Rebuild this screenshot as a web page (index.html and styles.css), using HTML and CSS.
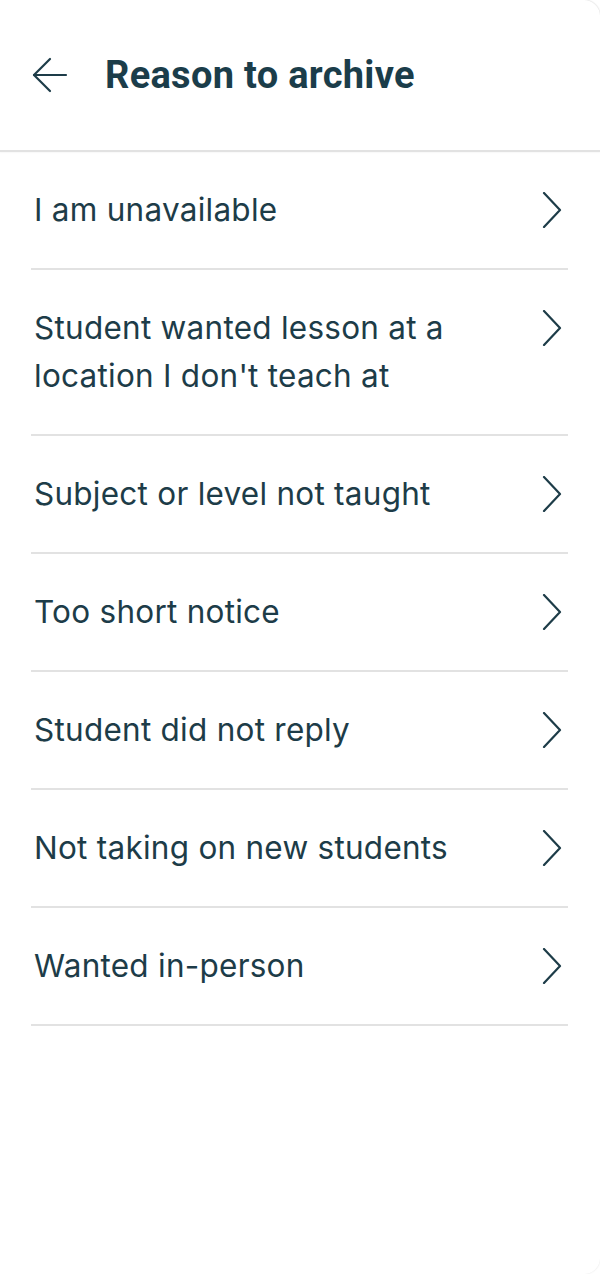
FILE: index.html
```html
<!DOCTYPE html>
<html lang="en">
<head>
  <meta charset="UTF-8">
  <title>Reason to archive</title>
  <link rel="stylesheet" href="styles.css">
</head>
<body>
  <div class="sheet">
    <!-- header -->
    <div class="sheet-header">
      <button class="back-btn" aria-label="Back">
        <svg width="40" height="40" viewBox="0 0 40 40" fill="none" stroke="currentColor" stroke-width="2.2" stroke-linecap="round" stroke-linejoin="round">
          <path d="M21 4 L5 20 L21 36"/>
          <path d="M5 20 H37"/>
        </svg>
      </button>
      <h1>Reason to archive</h1>
    </div>

    <!-- reasons -->
    <ul class="reason-list">
      <li class="reason"><span>I am unavailable</span><svg class="chev" viewBox="0 0 20 36" fill="none" stroke="currentColor" stroke-width="2.2" stroke-linecap="round" stroke-linejoin="round"><path d="M2 1 L18 18 L2 35"/></svg></li>
      <li class="reason"><span>Student wanted lesson at a location I don't teach at</span><svg class="chev" viewBox="0 0 20 36" fill="none" stroke="currentColor" stroke-width="2.2" stroke-linecap="round" stroke-linejoin="round"><path d="M2 1 L18 18 L2 35"/></svg></li>
      <li class="reason"><span>Subject or level not taught</span><svg class="chev" viewBox="0 0 20 36" fill="none" stroke="currentColor" stroke-width="2.2" stroke-linecap="round" stroke-linejoin="round"><path d="M2 1 L18 18 L2 35"/></svg></li>
      <li class="reason"><span>Too short notice</span><svg class="chev" viewBox="0 0 20 36" fill="none" stroke="currentColor" stroke-width="2.2" stroke-linecap="round" stroke-linejoin="round"><path d="M2 1 L18 18 L2 35"/></svg></li>
      <li class="reason"><span>Student did not reply</span><svg class="chev" viewBox="0 0 20 36" fill="none" stroke="currentColor" stroke-width="2.2" stroke-linecap="round" stroke-linejoin="round"><path d="M2 1 L18 18 L2 35"/></svg></li>
      <li class="reason"><span>Not taking on new students</span><svg class="chev" viewBox="0 0 20 36" fill="none" stroke="currentColor" stroke-width="2.2" stroke-linecap="round" stroke-linejoin="round"><path d="M2 1 L18 18 L2 35"/></svg></li>
      <li class="reason"><span>Wanted in-person</span><svg class="chev" viewBox="0 0 20 36" fill="none" stroke="currentColor" stroke-width="2.2" stroke-linecap="round" stroke-linejoin="round"><path d="M2 1 L18 18 L2 35"/></svg></li>
    </ul>
  </div>
</body>
</html>
```

FILE: styles.css
```css
html, body {
  margin: 0;
  padding: 0;
  background-color: #fff;
}
body {
  font-family: Inter, "Noto Sans", sans-serif;
  color: #1d3c48;
}
.sheet {
  min-height: 1274px;
  background-color: #fff;
  border-radius: 0 16px 16px 0;
  box-shadow: 0 0 2px rgba(0, 0, 0, 0.12);
}
.sheet-header {
  height: 150px;
  display: flex;
  align-items: center;
  padding: 0 0 0 25px;
  border-bottom: 2px solid #e2e2e2;
  border-radius: 0 16px 0 0;
  box-shadow: 0 0 2px rgba(0, 0, 0, 0.1);
}
.back-btn {
  background: none;
  border: none;
  padding: 0;
  color: #1d3c48;
  width: 48px;
  height: 48px;
  display: flex;
  align-items: center;
  justify-content: center;
  margin-right: 32px;
  cursor: pointer;
}
.sheet-header h1 {
  margin: 0;
  font-family: Roboto, "Liberation Sans", sans-serif;
  font-weight: 700;
  font-size: 38px;
  letter-spacing: 0.3px;
  color: #1b3d4a;
}
.reason-list {
  list-style: none;
  margin: 0 32px 0 31px;
  padding: 0;
}
.reason {
  display: flex;
  align-items: flex-start;
  justify-content: space-between;
  gap: 40px;
  padding: 34px 6px 34px 3px;
  border-bottom: 2px solid #e2e2e2;
  font-size: 31.5px;
  letter-spacing: 0.25px;
  line-height: 48px;
  cursor: pointer;
}
.chev {
  flex: none;
  width: 20px;
  height: 36px;
  margin-top: 6px;
  color: #1d3c48;
}
```
